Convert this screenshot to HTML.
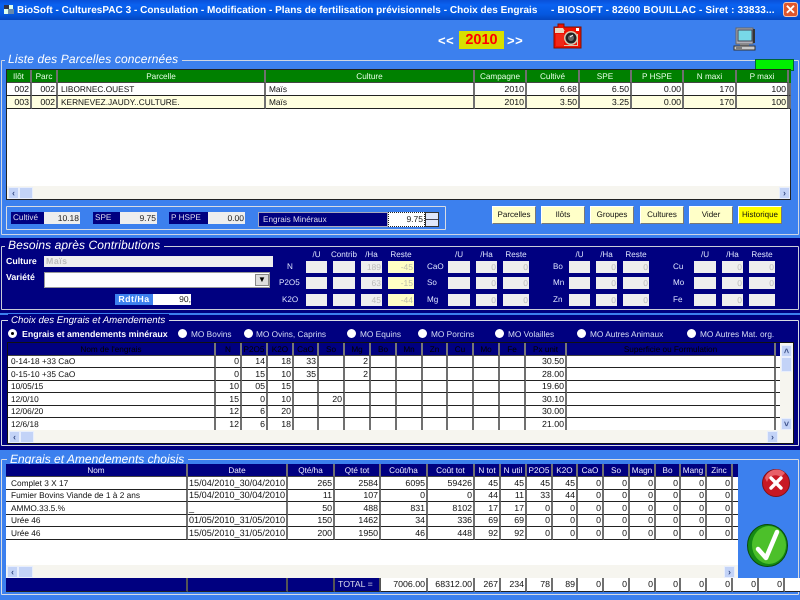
<!DOCTYPE html>
<html lang="fr"><head><meta charset="utf-8"><title>BioSoft</title>
<style>
html,body{margin:0;padding:0;width:800px;height:600px;overflow:hidden;background:#3c80ee}
body{position:relative;font:8.2px "Liberation Sans",sans-serif;color:#111;text-rendering:geometricPrecision}
.a,.b,.l,.w,table,.fr{position:absolute}
.fr{border:1px solid #d8dce4;border-radius:1px;box-sizing:border-box}
.lg{position:absolute;font:italic 12px "Liberation Sans",sans-serif;color:#fff;padding:0 4px 0 3px;white-space:nowrap;line-height:13px}
.n{background:#000080}
table{border-collapse:separate;border-spacing:0;table-layout:fixed;font-size:8.8px}
td,th{padding:0 1px 0 3px;overflow:hidden;white-space:nowrap;box-sizing:border-box;border-right:2px solid #707070;border-bottom:1px solid #222;text-align:right;font-weight:normal;line-height:11px}
th{text-align:center;border-bottom:1px solid #444;color:#e8ffe8;font-size:8.2px;padding:0 1px}
td.t{text-align:left;font-size:8.3px}
td.d{font-size:9.1px;padding-left:1px}
.g th{background:#008000}.g td{background:#fff}.g tr.y td{background:#ffffe0}
.h3 th{background:#000080;color:#000;border-right-color:#777}
.h4 th{background:#000080;color:#eef}
.f td{background:#fff;border-bottom:1px solid #222}
.f td.nv{background:#000080;color:#dde;border-right-color:#555;text-align:left}
.bt{position:absolute;top:206px;width:44px;height:18px;background:#ffffc8;border:1px solid;border-color:#fff #777 #777 #fff;box-sizing:border-box;text-align:center;line-height:16px;font-size:8px}
.sb{position:absolute;background:#f6f5ef}
.ar{position:absolute;width:11px;height:12px;background:#c3d3f7;border:1px solid #e8eefc;box-sizing:border-box;color:#3a4f88;font:bold 9px/10px "Liberation Sans",sans-serif;text-align:center}
.th{position:absolute;background:#c3d3f7;border:1px solid #e8eefc;box-sizing:border-box}
.b{background:#eee;height:12px;box-sizing:border-box;text-align:right;padding-right:1px;line-height:12px;color:#bbb;font-size:8.5px;overflow:hidden}
.y2{background:#ffffc4;color:#bba}
.l{color:#dfe6ff;line-height:12px;font-size:8.1px;white-space:nowrap}
.c{text-align:center}
.r{position:absolute;width:9px;height:9px;border-radius:50%;background:#fff;top:329px}
.rl{position:absolute;top:328px;color:#d6def5;font-size:8.3px;line-height:12px;white-space:nowrap}
.lb{position:absolute;top:212px;height:12px;color:#dde;line-height:12px;padding-left:2px;box-sizing:border-box;white-space:nowrap;background:#000080}
</style></head><body>

<!-- title bar -->
<div class="a" style="left:0;top:0;width:800px;height:20px;background:linear-gradient(#0a50d8,#0a62f0 25%,#0558e0 70%,#0446c0)"></div>
<svg class="a" style="left:3px;top:4px" width="12" height="12"><rect x="1" y="1" width="9" height="9" fill="#dfe"/><rect x="1" y="1" width="5" height="4" fill="#334"/><rect x="5" y="5" width="6" height="5" fill="#68a"/></svg>
<div class="a" style="left:17px;top:4px;color:#fff;font:bold 10px/13px 'Liberation Sans',sans-serif;white-space:pre;letter-spacing:.02px">BioSoft - CulturesPAC 3 - Consulation - Modification - Plans de fertilisation prévisionnels - Choix des Engrais</div>
<div class="a" style="left:551px;top:4px;color:#fff;font:bold 10px/13px 'Liberation Sans',sans-serif;white-space:pre;letter-spacing:.13px">- BIOSOFT - 82600 BOUILLAC - Siret : 33833...</div>
<div class="a" style="left:783px;top:2px;width:15px;height:15px;border-radius:3px;background:#e0562c;border:1px solid #f3c6b4;box-sizing:border-box;color:#fff;font:bold 13px/13px 'Liberation Sans',sans-serif;text-align:center">✕</div>

<!-- year -->
<div class="a" style="left:438px;top:34px;color:#fff;font:bold 13px/14px 'Liberation Sans',sans-serif;letter-spacing:.5px">&lt;&lt;</div>
<div class="a" style="left:459px;top:31px;width:45px;height:18px;background:#d8e000;color:#f00;font:bold 14.5px/18px 'Liberation Sans',sans-serif;text-align:center">2010</div>
<div class="a" style="left:507px;top:34px;color:#fff;font:bold 13px/14px 'Liberation Sans',sans-serif;letter-spacing:.5px">&gt;&gt;</div>

<!-- camera -->
<svg class="a" style="left:553px;top:22px" width="30" height="27" viewBox="0 0 30 27">
<path d="M1 5h4V2h6v3h17v21H1z" fill="#f01000" stroke="#801000"/>
<path d="M2 6h8l3 5H2z" fill="#e8d8c0"/>
<path d="M3 12h8v12H3z" fill="#f02818"/>
<rect x="11" y="9" width="14" height="15" fill="#f01000"/>
<path d="M11 23h14v1H11zM24 12h1v11h-1z" fill="#d8c8b0"/>
<circle cx="18" cy="16" r="7" fill="#d8c8b0"/>
<circle cx="18" cy="16" r="5.5" fill="#222"/><circle cx="18" cy="16" r="3" fill="#666"/><path d="M17 15l3-2" stroke="#fff"/>
<rect x="23" y="6" width="3" height="3" fill="#fff"/>
</svg>
<!-- computer -->
<svg class="a" style="left:733px;top:27px" width="24" height="25" viewBox="0 0 24 25">
<rect x="3" y="1" width="17" height="16" fill="#b0b0b8" stroke="#666"/>
<rect x="5" y="3" width="14" height="11" fill="#78d8e8" stroke="#445"/>
<path d="M20 2h2v14h-2z" fill="#333"/>
<rect x="7" y="17" width="9" height="2" fill="#888"/>
<rect x="1" y="19" width="21" height="4" fill="#c8c8c8" stroke="#333"/>
<path d="M3 21h6" stroke="#333"/>
</svg>

<!-- section 1 -->
<div class="fr" style="left:1px;top:60px;width:798px;height:175px;border-color:#cfd6e4"></div>
<div class="lg" style="left:5px;top:53px;background:#3c80ee;letter-spacing:.14px">Liste des Parcelles concernées</div>
<div class="a" style="left:755px;top:59px;width:39px;height:12px;background:#00f000;border:1px solid #063;box-sizing:border-box"></div>

<div class="a" style="left:6px;top:69px;width:785px;height:131px;background:#fff;border:1px solid #222;box-sizing:border-box"></div>
<table class="g" style="left:7px;top:70px;width:784px">
<colgroup><col style="width:25px"><col style="width:26px"><col style="width:208px"><col style="width:209px"><col style="width:52px"><col style="width:53px"><col style="width:52px"><col style="width:52px"><col style="width:53px"><col style="width:52px"><col style="width:2px"></colgroup>
<tr style="height:13px"><th>Ilôt</th><th>Parc</th><th>Parcelle</th><th>Culture</th><th>Campagne</th><th>Cultivé</th><th>SPE</th><th>P HSPE</th><th>N maxi</th><th>P maxi</th><th style="border:0"></th></tr>
<tr style="height:13px"><td>002</td><td>002</td><td class="t">LIBORNEC.OUEST</td><td class="t">Maïs</td><td>2010</td><td>6.68</td><td>6.50</td><td>0.00</td><td>170</td><td>100</td><td></td></tr>
<tr class="y" style="height:13px"><td>003</td><td>002</td><td class="t">KERNEVEZ.JAUDY..CULTURE.</td><td class="t">Maïs</td><td>2010</td><td>3.50</td><td>3.25</td><td>0.00</td><td>170</td><td>100</td><td></td></tr>
</table>
<div class="sb" style="left:7px;top:186px;width:783px;height:13px"></div>
<div class="ar" style="left:8px;top:187px">‹</div><div class="th" style="left:19px;top:187px;width:14px;height:12px"></div>
<div class="ar" style="left:779px;top:187px">›</div>

<div class="fr" style="left:6px;top:206px;width:440px;height:24px;border-color:#d8dce4"></div>
<div class="lb" style="left:11px;width:33px">Cultivé</div>
<div class="b" style="left:44px;top:212px;width:36px;color:#222">10.18</div>
<div class="lb" style="left:93px;width:27px">SPE</div>
<div class="b" style="left:120px;top:212px;width:37px;color:#222">9.75</div>
<div class="lb" style="left:169px;width:39px">P HSPE</div>
<div class="b" style="left:208px;top:212px;width:37px;color:#222">0.00</div>
<div class="a n" style="left:258px;top:212px;width:130px;height:15px;border:1px solid #aab;box-sizing:border-box;color:#dde;line-height:13px;padding-left:4px">Engrais Minéraux</div>
<div class="a" style="left:388px;top:212px;width:37px;height:15px;background:#fff;border:1px dotted #222;box-sizing:border-box;text-align:right;line-height:13px;padding-right:1px;color:#222;font-size:8.5px">9.75</div>
<div class="a" style="left:425px;top:212px;width:14px;height:15px;background:linear-gradient(#dfe6fa 47%,#445 47%,#445 53%,#dfe6fa 53%);border:1px solid #333;box-sizing:border-box"></div>

<div class="bt" style="left:492px">Parcelles</div>
<div class="bt" style="left:541px">Ilôts</div>
<div class="bt" style="left:590px">Groupes</div>
<div class="bt" style="left:640px">Cultures</div>
<div class="bt" style="left:689px">Vider</div>
<div class="bt" style="left:738px;background:#ffff00">Historique</div>

<!-- section 2 -->
<div class="a n" style="left:0;top:238px;width:800px;height:75px"></div>
<div class="fr" style="left:1px;top:246px;width:798px;height:64px;border-color:#c8ccd8"></div>
<div class="lg" style="left:5px;top:239px;background:#000080;letter-spacing:.08px">Besoins après Contributions</div>
<div class="l" style="left:6px;top:255px;color:#fff;font-weight:bold;font-size:8.8px">Culture</div>
<div class="a" style="left:44px;top:256px;width:229px;height:11px;background:#eee;color:#bbb;font:bold 8.8px/11px 'Liberation Sans',sans-serif;padding-left:2px;box-sizing:border-box;letter-spacing:.5px">Maïs</div>
<div class="l" style="left:6px;top:271px;color:#fff;font-weight:bold;font-size:8.8px">Variété</div>
<div class="a" style="left:44px;top:272px;width:226px;height:16px;background:#fff;border:1px solid #999;box-sizing:border-box"></div>
<div class="a" style="left:255px;top:274px;width:14px;height:12px;background:#ddd;border:1px solid #888;box-sizing:border-box;font:8px/10px 'Liberation Sans',sans-serif;text-align:center;color:#000">▼</div>
<div class="a" style="left:115px;top:294px;width:38px;height:11px;background:#3c80ee;color:#fff;font:bold 8.8px/11px 'Liberation Sans',sans-serif;text-align:center;letter-spacing:.5px">Rdt/Ha</div>
<div class="a" style="left:153px;top:294px;width:38px;height:11px;background:#fff;text-align:right;line-height:11px;color:#222;font-size:8.5px">90,</div>

<div class="l c" style="left:306px;top:249px;width:21px">/U</div><div class="l c" style="left:329px;top:249px;width:30px">Contrib</div><div class="l c" style="left:361px;top:249px;width:21px">/Ha</div><div class="l c" style="left:388px;top:249px;width:26px">Reste</div>
<div class="l c" style="left:448px;top:249px;width:22px">/U</div><div class="l c" style="left:476px;top:249px;width:21px">/Ha</div><div class="l c" style="left:503px;top:249px;width:26px">Reste</div>
<div class="l c" style="left:569px;top:249px;width:21px">/U</div><div class="l c" style="left:596px;top:249px;width:21px">/Ha</div><div class="l c" style="left:623px;top:249px;width:26px">Reste</div>
<div class="l c" style="left:694px;top:249px;width:22px">/U</div><div class="l c" style="left:722px;top:249px;width:21px">/Ha</div><div class="l c" style="left:749px;top:249px;width:26px">Reste</div>

<div class="l" style="left:287px;top:261px">N</div><div class="l" style="left:279px;top:277px">P2O5</div><div class="l" style="left:282px;top:294px">K2O</div>
<div class="l" style="left:427px;top:261px">CaO</div><div class="l" style="left:427px;top:277px">So</div><div class="l" style="left:427px;top:294px">Mg</div>
<div class="l" style="left:553px;top:261px">Bo</div><div class="l" style="left:553px;top:277px">Mn</div><div class="l" style="left:553px;top:294px">Zn</div>
<div class="l" style="left:673px;top:261px">Cu</div><div class="l" style="left:673px;top:277px">Mo</div><div class="l" style="left:673px;top:294px">Fe</div>

<div class="b" style="left:306px;top:261px;width:21px"></div><div class="b" style="left:333px;top:261px;width:22px"></div><div class="b" style="left:361px;top:261px;width:21px">189</div><div class="b y2" style="left:388px;top:261px;width:26px">-45</div>
<div class="b" style="left:306px;top:277px;width:21px"></div><div class="b" style="left:333px;top:277px;width:22px"></div><div class="b" style="left:361px;top:277px;width:21px">63</div><div class="b y2" style="left:388px;top:277px;width:26px">-15</div>
<div class="b" style="left:306px;top:294px;width:21px"></div><div class="b" style="left:333px;top:294px;width:22px"></div><div class="b" style="left:361px;top:294px;width:21px">45</div><div class="b y2" style="left:388px;top:294px;width:26px">-44</div>

<div class="b" style="left:448px;top:261px;width:22px"></div><div class="b" style="left:476px;top:261px;width:21px">0</div><div class="b" style="left:503px;top:261px;width:26px">0</div>
<div class="b" style="left:448px;top:277px;width:22px"></div><div class="b" style="left:476px;top:277px;width:21px">0</div><div class="b" style="left:503px;top:277px;width:26px">0</div>
<div class="b" style="left:448px;top:294px;width:22px"></div><div class="b" style="left:476px;top:294px;width:21px">0</div><div class="b" style="left:503px;top:294px;width:26px">0</div>

<div class="b" style="left:569px;top:261px;width:21px"></div><div class="b" style="left:596px;top:261px;width:21px">0</div><div class="b" style="left:623px;top:261px;width:26px">0</div>
<div class="b" style="left:569px;top:277px;width:21px"></div><div class="b" style="left:596px;top:277px;width:21px">0</div><div class="b" style="left:623px;top:277px;width:26px">0</div>
<div class="b" style="left:569px;top:294px;width:21px"></div><div class="b" style="left:596px;top:294px;width:21px">0</div><div class="b" style="left:623px;top:294px;width:26px">0</div>

<div class="b" style="left:694px;top:261px;width:22px"></div><div class="b" style="left:722px;top:261px;width:21px">0</div><div class="b" style="left:749px;top:261px;width:26px">0</div>
<div class="b" style="left:694px;top:277px;width:22px"></div><div class="b" style="left:722px;top:277px;width:21px">0</div><div class="b" style="left:749px;top:277px;width:26px">0</div>
<div class="b" style="left:694px;top:294px;width:22px"></div><div class="b" style="left:722px;top:294px;width:21px">0</div><div class="b" style="left:749px;top:294px;width:26px"></div>

<!-- section 3 -->
<div class="a n" style="left:0;top:315px;width:800px;height:135px"></div>
<div class="fr" style="left:1px;top:320px;width:798px;height:126px;border-color:#d8dce4"></div>
<div class="lg" style="left:8px;top:314px;background:#000080;font-size:9.7px">Choix des Engrais et Amendements</div>

<div class="r" style="left:8px;background:#fff"><div class="a" style="left:3px;top:3px;width:3px;height:3px;background:#000;border-radius:50%"></div></div>
<div class="rl" style="left:22px;font-weight:bold;color:#fff;font-size:8.8px">Engrais et amendements minéraux</div>
<div class="r" style="left:178px"></div><div class="rl" style="left:191px">MO Bovins</div>
<div class="r" style="left:244px"></div><div class="rl" style="left:256px">MO Ovins, Caprins</div>
<div class="r" style="left:347px"></div><div class="rl" style="left:360px">MO Equins</div>
<div class="r" style="left:418px"></div><div class="rl" style="left:431px">MO Porcins</div>
<div class="r" style="left:495px"></div><div class="rl" style="left:508px">MO Volailles</div>
<div class="r" style="left:577px"></div><div class="rl" style="left:590px">MO Autres Animaux</div>
<div class="r" style="left:687px"></div><div class="rl" style="left:700px">MO Autres Mat. org.</div>

<div class="a" style="left:7px;top:342px;width:787px;height:102px;background:#f6f5ef;border:1px solid #111;box-sizing:border-box"></div>
<table class="h3" style="left:8px;top:343px;width:772px">
<colgroup><col style="width:208px"><col style="width:26px"><col style="width:26px"><col style="width:26px"><col style="width:25px"><col style="width:26px"><col style="width:26px"><col style="width:26px"><col style="width:26px"><col style="width:25px"><col style="width:26px"><col style="width:26px"><col style="width:26px"><col style="width:41px"><col style="width:209px"><col style="width:4px"></colgroup>
<tr style="height:13px"><th>Nom de l'engrais</th><th>N</th><th>P2O5</th><th>K2O</th><th>CaO</th><th>So</th><th>Mg</th><th>Bo</th><th>Mn</th><th>Zn</th><th>Cu</th><th>Mo</th><th>Fe</th><th>Px unit</th><th>Superficie ou Formulation</th><th style="border:0"></th></tr>
<tr style="height:12px;background:#fff"><td class="t">0-14-18 +33 CaO</td><td>0</td><td>14</td><td>18</td><td>33</td><td></td><td>2</td><td></td><td></td><td></td><td></td><td></td><td></td><td>30.50</td><td></td><td style="border-right:0"></td></tr>
<tr style="height:13px;background:#fff"><td class="t">0-15-10 +35 CaO</td><td>0</td><td>15</td><td>10</td><td>35</td><td></td><td>2</td><td></td><td></td><td></td><td></td><td></td><td></td><td>28.00</td><td></td><td style="border-right:0"></td></tr>
<tr style="height:12px;background:#fff"><td class="t">10/05/15</td><td>10</td><td>05</td><td>15</td><td></td><td></td><td></td><td></td><td></td><td></td><td></td><td></td><td></td><td>19.60</td><td></td><td style="border-right:0"></td></tr>
<tr style="height:13px;background:#fff"><td class="t">12/0/10</td><td>15</td><td>0</td><td>10</td><td></td><td>20</td><td></td><td></td><td></td><td></td><td></td><td></td><td></td><td>30.10</td><td></td><td style="border-right:0"></td></tr>
<tr style="height:12px;background:#fff"><td class="t">12/06/20</td><td>12</td><td>6</td><td>20</td><td></td><td></td><td></td><td></td><td></td><td></td><td></td><td></td><td></td><td>30.00</td><td></td><td style="border-right:0"></td></tr>
<tr style="height:12px;background:#fff"><td class="t" style="border-bottom:0">12/6/18</td><td style="border-bottom:0">12</td><td style="border-bottom:0">6</td><td style="border-bottom:0">18</td><td style="border-bottom:0"></td><td style="border-bottom:0"></td><td style="border-bottom:0"></td><td style="border-bottom:0"></td><td style="border-bottom:0"></td><td style="border-bottom:0"></td><td style="border-bottom:0"></td><td style="border-bottom:0"></td><td style="border-bottom:0"></td><td style="border-bottom:0">21.00</td><td style="border-bottom:0"></td><td style="border:0"></td></tr>
</table>
<div class="ar" style="left:9px;top:431px">‹</div><div class="th" style="left:20px;top:431px;width:14px;height:12px"></div>
<div class="ar" style="left:767px;top:431px">›</div>
<div class="ar" style="left:781px;top:345px;height:12px">˄</div><div class="th" style="left:781px;top:357px;width:11px;height:15px"></div>
<div class="ar" style="left:781px;top:418px;height:12px">˅</div>

<!-- section 4 -->
<div class="fr" style="left:1px;top:459px;width:798px;height:136px;border-color:#d8dce4"></div>
<div class="lg" style="left:7px;top:453px;background:#3c80ee">Engrais et Amendements choisis</div>

<div class="a" style="left:6px;top:464px;width:732px;height:114px;background:#fff"></div>
<table class="h4" style="left:6px;top:464px;width:732px">
<colgroup><col style="width:182px"><col style="width:100px"><col style="width:47px"><col style="width:46px"><col style="width:47px"><col style="width:47px"><col style="width:26px"><col style="width:26px"><col style="width:26px"><col style="width:25px"><col style="width:26px"><col style="width:26px"><col style="width:26px"><col style="width:25px"><col style="width:26px"><col style="width:26px"><col style="width:5px"></colgroup>
<tr style="height:13px"><th>Nom</th><th>Date</th><th>Qté/ha</th><th>Qté tot</th><th>Coût/ha</th><th>Coût tot</th><th>N tot</th><th>N util</th><th>P2O5</th><th>K2O</th><th>CaO</th><th>So</th><th>Magn</th><th>Bo</th><th>Mang</th><th>Zinc</th><th style="border:0"></th></tr>
<tr style="height:13px"><td class="t" style="padding-left:5px">Complet 3 X 17</td><td class="t d">15/04/2010_30/04/2010</td><td>265</td><td>2584</td><td>6095</td><td>59426</td><td>45</td><td>45</td><td>45</td><td>45</td><td>0</td><td>0</td><td>0</td><td>0</td><td>0</td><td>0</td><td style="border-right:0"></td></tr>
<tr style="height:12px"><td class="t" style="padding-left:5px">Fumier Bovins Viande de 1 à 2 ans</td><td class="t d">15/04/2010_30/04/2010</td><td>11</td><td>107</td><td>0</td><td>0</td><td>44</td><td>11</td><td>33</td><td>44</td><td>0</td><td>0</td><td>0</td><td>0</td><td>0</td><td>0</td><td style="border-right:0"></td></tr>
<tr style="height:13px"><td class="t" style="padding-left:5px">AMMO.33.5.%</td><td class="t d">_</td><td>50</td><td>488</td><td>831</td><td>8102</td><td>17</td><td>17</td><td>0</td><td>0</td><td>0</td><td>0</td><td>0</td><td>0</td><td>0</td><td>0</td><td style="border-right:0"></td></tr>
<tr style="height:12px"><td class="t" style="padding-left:5px">Urée 46</td><td class="t d">01/05/2010_31/05/2010</td><td>150</td><td>1462</td><td>34</td><td>336</td><td>69</td><td>69</td><td>0</td><td>0</td><td>0</td><td>0</td><td>0</td><td>0</td><td>0</td><td>0</td><td style="border-right:0"></td></tr>
<tr style="height:13px"><td class="t" style="padding-left:5px">Urée 46</td><td class="t d">15/05/2010_31/05/2010</td><td>200</td><td>1950</td><td>46</td><td>448</td><td>92</td><td>92</td><td>0</td><td>0</td><td>0</td><td>0</td><td>0</td><td>0</td><td>0</td><td>0</td><td style="border-right:0"></td></tr>
</table>
<div class="sb" style="left:6px;top:565px;width:732px;height:13px"></div>
<div class="ar" style="left:7px;top:566px">‹</div><div class="th" style="left:18px;top:566px;width:15px;height:12px"></div>
<div class="ar" style="left:724px;top:566px">›</div>

<table class="f" style="left:6px;top:578px;width:794px">
<colgroup><col style="width:182px"><col style="width:100px"><col style="width:47px"><col style="width:46px"><col style="width:47px"><col style="width:47px"><col style="width:26px"><col style="width:26px"><col style="width:26px"><col style="width:25px"><col style="width:26px"><col style="width:26px"><col style="width:26px"><col style="width:25px"><col style="width:26px"><col style="width:26px"><col style="width:26px"><col style="width:26px"><col style="width:15px"></colgroup>
<tr style="height:14px"><td class="nv"></td><td class="nv"></td><td class="nv"></td><td class="nv" style="padding-left:3px">TOTAL =</td><td>7006.00</td><td>68312.00</td><td>267</td><td>234</td><td>78</td><td>89</td><td>0</td><td>0</td><td>0</td><td>0</td><td>0</td><td>0</td><td>0</td><td>0</td><td style="border-right:0"></td></tr>
</table>

<!-- cancel -->
<svg class="a" style="left:761px;top:468px" width="30" height="30" viewBox="0 0 30 30">
<circle cx="15" cy="15" r="13.5" fill="#c81824" stroke="#801018"/>
<path d="M4 10a12 12 0 0 1 20-5l-4 4a9 9 0 0 0-14 5z" fill="#e86068"/>
<path d="M10 10l10 10M20 10l-10 10" stroke="#fff" stroke-width="3.4" stroke-linecap="round"/>
</svg>
<!-- ok -->
<svg class="a" style="left:746px;top:523px" width="43" height="45" viewBox="0 0 43 45">
<ellipse cx="21.5" cy="22.5" rx="20" ry="21" fill="#158a15" stroke="#0a4a0a"/>
<ellipse cx="23" cy="22" rx="17" ry="19" fill="#4cc02a"/>
<path d="M12 26l8 9L31 9" fill="none" stroke="#fff" stroke-width="4.5" stroke-linecap="round" stroke-linejoin="round"/>
</svg>
</body></html>
